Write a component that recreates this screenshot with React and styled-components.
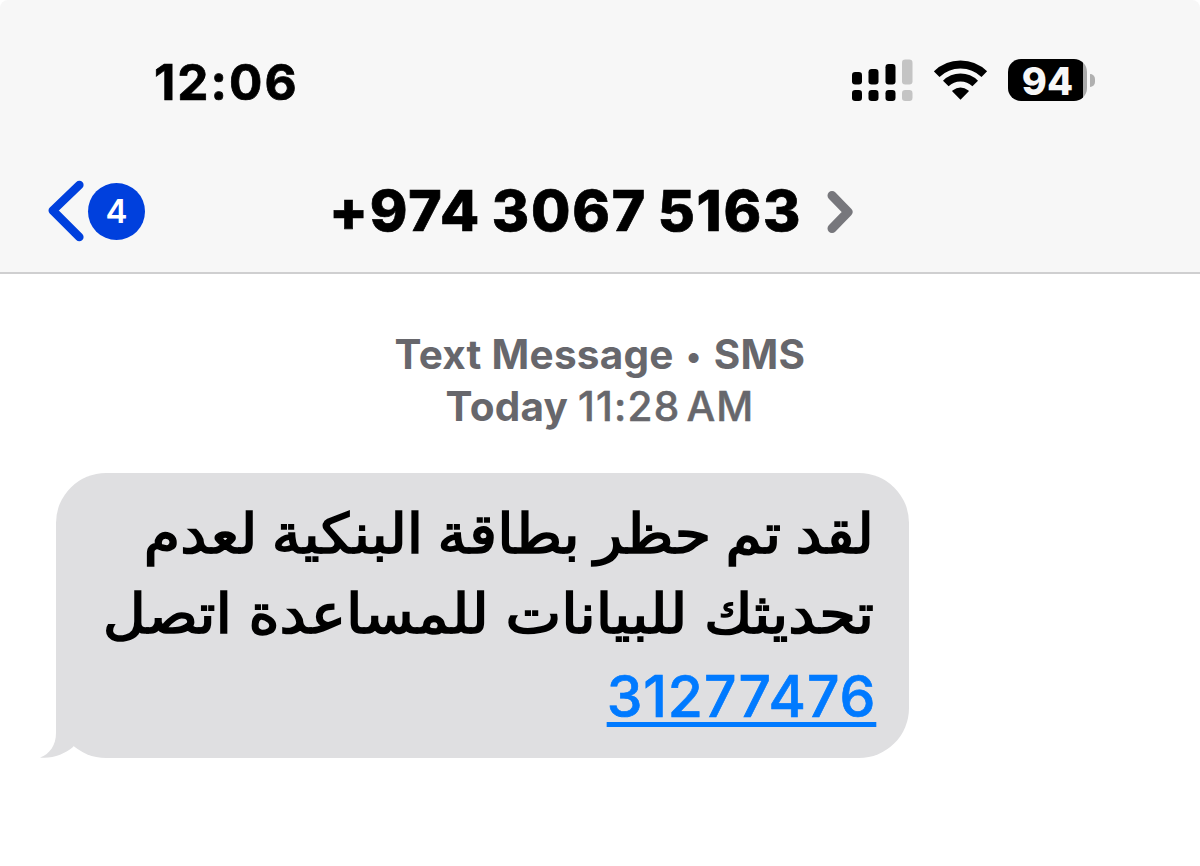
import React from "react";
import styled, { createGlobalStyle } from "styled-components";

const GlobalStyle = createGlobalStyle`
  * { box-sizing: border-box; }
  body {
    margin: 0;
    background: #fff;
    font-family: Inter, "Liberation Sans", sans-serif;
    overflow: hidden;
  }
`;

const Screen = styled.main`
  width: 1200px;
  height: 866px;
  background: #fff;
  overflow: hidden;
`;

const Header = styled.header`
  height: 274px;
  background: #f7f7f7;
  border-bottom: 2px solid #cfcfd0;
  border-radius: 8px 8px 0 0;
`;

const StatusBar = styled.div`
  display: flex;
  align-items: center;
  justify-content: space-between;
  height: 160px;
  padding: 0 105px 0 154px;
`;

const Clock = styled.time`
  font-size: 49.5px;
  line-height: 60px;
  font-weight: 750;
  letter-spacing: 2px;
  color: #000;
  -webkit-text-stroke: 0.7px #000;
  margin-top: 3px;
`;

const StatusIcons = styled.div`
  display: flex;
  align-items: center;
  gap: 20px;
`;

const Battery = styled.div`
  display: flex;
  align-items: center;
  gap: 3px;
`;

const BatteryBody = styled.div`
  width: 79px;
  height: 42px;
  border-radius: 13px;
  padding-top: 1px;
  display: flex;
  align-items: center;
  justify-content: center;
  background: linear-gradient(to right, #000 75px, #a9a9a9 75px);
  color: #f7f7f7;
  font-size: 38px;
  line-height: 42px;
  font-weight: 800;
`;

const BatteryCap = styled.div`
  width: 5px;
  height: 13px;
  border-radius: 0 6px 6px 0;
  background: #b0b0b0;
`;

const NavBar = styled.nav`
  display: flex;
  align-items: center;
  height: 102px;
  padding-left: 46px;
`;

const BackButton = styled.div`
  display: flex;
  align-items: center;
  gap: 4px;
  width: 283px;
`;

const UnreadCount = styled.span`
  width: 57px;
  height: 57px;
  border-radius: 50%;
  background: #0040dd;
  color: #fff;
  font-size: 33px;
  line-height: 57px;
  font-weight: 600;
  text-align: center;
`;

const Contact = styled.h1`
  margin: 0;
  display: flex;
  align-items: center;
  gap: 25px;
  font-size: 57px;
  line-height: 70px;
  font-weight: 780;
  color: #000;
  white-space: nowrap;
`;

const ContactNumber = styled.span`
  letter-spacing: 1.75px;
  word-spacing: -3.5px;
  -webkit-text-stroke: 0.7px #000;
`;

const Thread = styled.section`
  padding: 55px 0 0 56px;
`;

const Stamp = styled.div`
  margin-left: -56px;
  text-align: center;
  font-size: 40.5px;
  line-height: 52px;
  font-weight: 650;
  color: #67676c;
  white-space: nowrap;
`;

const StampLine = styled.div`
  height: 52px;
  letter-spacing: 0.25px;
`;

const Separator = styled.span`
  margin: 0 2.5px;
  font-size: 32px;
  line-height: 0;
  vertical-align: 2.5px;
`;

const StampTime = styled.span`
  font-weight: 500;
  letter-spacing: 1.2px;
  word-spacing: -6px;
  -webkit-text-stroke: 0.5px #67676c;
`;

const Bubble = styled.div`
  position: relative;
  direction: rtl;
  width: 853px;
  height: 285px;
  margin-top: 40px;
  padding: 20px 35px 0 0;
  border-radius: 50px;
  background: #dfdfe1;
`;

const Tail = styled.svg`
  position: absolute;
  left: -16px;
  bottom: 0;
`;

const MessageLine = styled.div`
  height: 80px;
  line-height: 82px;
  font-family: "DejaVu Sans", sans-serif;
  font-size: 55px;
  color: #000;
  white-space: nowrap;
  word-spacing: ${(p) => p.$gap};
  transform-origin: right center;
  transform: scaleX(${(p) => p.$stretch || 1});
  -webkit-text-stroke: 1.7px #000;
`;

const PhoneLink = styled.a`
  display: block;
  width: 271px;
  height: 75px;
  margin-right: -3px;
  padding-top: 2px;
  direction: ltr;
  text-align: center;
  color: #007aff;
  font-size: 57px;
  line-height: 84px;
  font-weight: 550;
  letter-spacing: 0.9px;
  -webkit-text-stroke: 0.7px #007aff;
  text-decoration: underline;
  text-decoration-thickness: 5px;
  text-underline-offset: 5px;
  text-decoration-skip-ink: none;
`;

const Signal = () => (
  <svg width="62" height="42" viewBox="0 0 62 42">
    <g fill="#000">
      <rect x="0" y="13" width="10" height="12.5" rx="3.2" />
      <rect x="16.5" y="10" width="10" height="15.5" rx="3.2" />
      <rect x="33.5" y="5" width="10" height="20.5" rx="3.2" />
      <rect x="0" y="31" width="10" height="11" rx="3.2" />
      <rect x="16.5" y="31" width="10" height="11" rx="3.2" />
      <rect x="33.5" y="31" width="10" height="11" rx="3.2" />
    </g>
    <g fill="#c4c4c4">
      <rect x="50" y="0.5" width="10.5" height="25" rx="3.2" />
      <rect x="50" y="31" width="10.5" height="11" rx="3.2" />
    </g>
  </svg>
);

const Wifi = () => (
  <svg width="54" height="42" viewBox="0 0 54 42">
    <path d="M2.7 15.2 A34 34 0 0 1 50.3 15.2" fill="none" stroke="#000" strokeWidth="8" />
    <path d="M11.8 24.5 A21 21 0 0 1 41.2 24.5" fill="none" stroke="#000" strokeWidth="8" />
    <path d="M26.5 40.8 L18.4 32.6 Q17.8 32 18.5 31.4 Q26.5 25.6 34.5 31.4 Q35.2 32 34.6 32.6 Z" fill="#000" />
  </svg>
);

const BackChevron = () => (
  <svg width="38" height="62" viewBox="0 0 38 62" fill="none" stroke="#0040dd" strokeWidth="8.6" strokeLinecap="round" strokeLinejoin="round">
    <path d="M33.3 5 L6.8 30.5 L33.3 57" />
  </svg>
);

const DetailChevron = () => (
  <svg width="26" height="44" viewBox="0 0 26 44" fill="none" stroke="#77777c" strokeWidth="9" strokeLinecap="round" strokeLinejoin="round">
    <path d="M5 6.5 L21 23 L5 39.5" />
  </svg>
);

export default function App() {
  return (
    <Screen>
      <GlobalStyle />
      <Header>
        <StatusBar>
          <Clock>12:06</Clock>
          <StatusIcons>
            <Signal />
            <Wifi />
            <Battery>
              <BatteryBody>94</BatteryBody>
              <BatteryCap />
            </Battery>
          </StatusIcons>
        </StatusBar>
        <NavBar>
          <BackButton>
            <BackChevron />
            <UnreadCount>4</UnreadCount>
          </BackButton>
          <Contact>
            <ContactNumber>+974 3067 5163</ContactNumber>
            <DetailChevron />
          </Contact>
        </NavBar>
      </Header>
      <Thread>
        <Stamp>
          <StampLine>
            Text Message <Separator>•</Separator> SMS
          </StampLine>
          <StampLine>
            Today <StampTime>11:28 AM</StampTime>
          </StampLine>
        </Stamp>
        <Bubble>
          <MessageLine $gap="-4px" $stretch={1.069}>لقد تم حظر بطاقة البنكية لعدم</MessageLine>
          <MessageLine $gap="-2px" $stretch={1.077}>تحديثك للبيانات للمساعدة اتصل</MessageLine>
          <PhoneLink>31277476</PhoneLink>
          <Tail width="40" height="70" viewBox="0 -30 40 70">
            <path d="M16 -30 V15 C16 27 10 36 0 39.5 C12 41 25 36 33 29 L40 20 V-30 Z" fill="#dfdfe1" />
          </Tail>
        </Bubble>
      </Thread>
    </Screen>
  );
}
